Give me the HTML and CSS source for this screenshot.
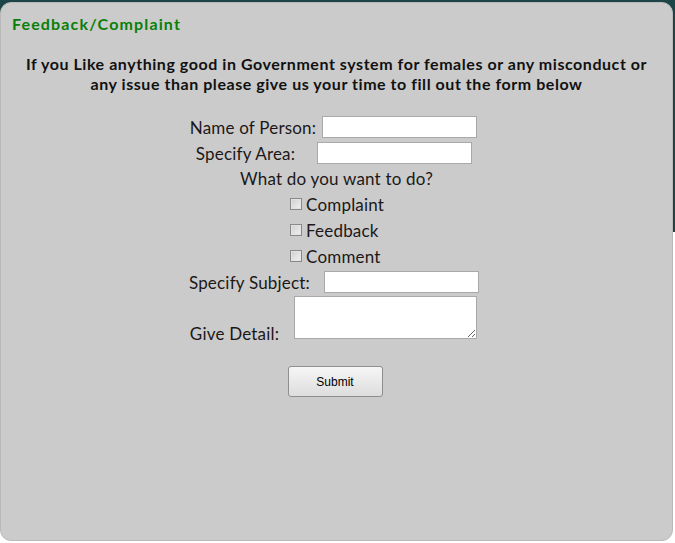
FILE: index.html
```html
<!DOCTYPE html>
<html>
<head>
<meta charset="utf-8">
<link rel="stylesheet" href="styles.css">
</head>
<body>
<div class="panel">
  <h2 class="title">Feedback/Complaint</h2>
  <p class="intro">If you Like anything good in Government system for females or any misconduct or any issue than please give us your time to fill out the form below</p>
  <form class="form">
    <div class="row row-name"><label>Name of Person:</label><input class="field" type="text"></div>
    <div class="row row-area"><label>Specify Area:</label><input class="field" type="text"></div>
    <div class="row row-q">What do you want to do?</div>
    <div class="checks">
      <label class="check"><input type="checkbox" class="cb"><span>Complaint</span></label>
      <label class="check"><input type="checkbox" class="cb"><span>Feedback</span></label>
      <label class="check"><input type="checkbox" class="cb"><span>Comment</span></label>
    </div>
    <div class="row row-subj"><label>Specify Subject:</label><input class="field" type="text"></div>
    <div class="row row-detail"><label>Give Detail:</label><textarea class="area"></textarea></div>
    <div class="row row-submit"><button type="button" class="btn">Submit</button></div>
  </form>
</div>
</body>
</html>
```
FILE: styles.css
```css
html, body {
  margin: 0;
  padding: 0;
}
body {
  width: 675px;
  height: 543px;
  background: linear-gradient(#1d4446 0, #1d4446 232px, #ffffff 232px);
  font-family: "Lato", "Liberation Sans", sans-serif;
  overflow: hidden;
}
.panel {
  box-sizing: border-box;
  width: 673px;
  height: 539px;
  margin-top: 2px;
  background: #cbcbcb;
  border: 1px solid #b9b9b9;
  border-radius: 11px;
}
.title {
  margin: 0;
  padding: 11px 0 0 11px;
  font-size: 16px;
  font-weight: bold;
  letter-spacing: 1.15px;
  color: #088008;
  line-height: 20px;
}
.intro {
  margin: 20px 12px 0 12px;
  text-align: center;
  font-size: 16px;
  font-weight: bold;
  letter-spacing: 0.55px;
  line-height: 20px;
  color: #111;
}
.form {
  margin-top: 20px;
  font-size: 17px;
  letter-spacing: 0.2px;
  color: #1c1818;
}
.row {
  display: flex;
  justify-content: center;
  align-items: center;
  height: 26px;
}
.row label {
  white-space: nowrap;
}
.field {
  box-sizing: border-box;
  width: 155px;
  height: 22px;
  border: 1px solid #a9a9a9;
  background: #fff;
  margin: 0;
  padding: 0;
}
.row-name { padding-right: 6px; }
.row-name .field { margin-left: 6px; }
.row-area { padding-right: 5px; }
.row-area .field { margin-left: 22px; }
.row-q { height: 25px; }
.checks {
  display: flex;
  flex-direction: column;
  padding-left: 289px;
}
.check {
  display: flex;
  align-items: center;
  height: 26px;
}
.check span { margin-left: 4px; }
.cb {
  appearance: none;
  -webkit-appearance: none;
  box-sizing: border-box;
  width: 12px;
  height: 12px;
  margin: 0;
  border: 1px solid #8a8a8a;
  background: linear-gradient(135deg, #cfcfcf, #f2f2f2);
  box-shadow: inset 0 0 0 1px #e2e2e2;
}
.row-subj { padding-right: 5px; }
.row-subj .field { margin-left: 14px; }
.row-detail {
  height: 45px;
  align-items: flex-end;
  padding-right: 6px;
}
.row-detail label { margin-bottom: -4px; }
.area {
  box-sizing: border-box;
  width: 183px;
  height: 43px;
  margin: 0 0 1px 15px;
  border: 1px solid #a9a9a9;
  background: #fff;
  resize: both;
}
.row-submit {
  height: auto;
  margin-top: 26px;
  padding-right: 3px;
}
.btn {
  box-sizing: border-box;
  width: 95px;
  height: 31px;
  font-family: "Liberation Sans", Arial, sans-serif;
  font-size: 12px;
  color: #000;
  border: 1px solid #8e8e8e;
  border-radius: 3px;
  background: linear-gradient(#f6f6f6, #dddddd);
}
```
